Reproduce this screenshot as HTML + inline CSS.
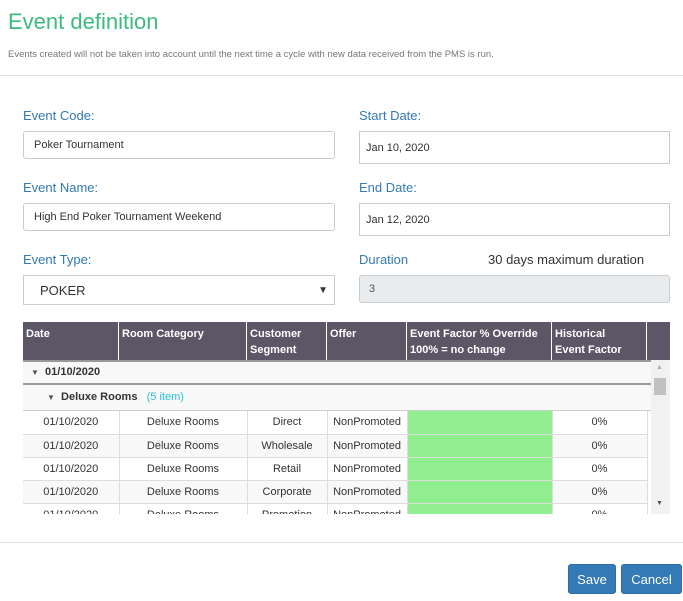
<!DOCTYPE html>
<html><head><style>
*{box-sizing:border-box;margin:0;padding:0}
body{width:683px;height:601px;background:#fff;font-family:"Liberation Sans",sans-serif;position:relative;overflow:hidden;color:#333}
.a{position:absolute}
.lbl{color:#337ab7;font-size:13px}
.inp{border:1px solid #ccc;border-radius:3px;background:#fff;font-size:11px;padding-left:10px;display:flex;align-items:center;color:#333}
table{border-collapse:collapse;table-layout:fixed;font-size:11px}
td{border-right:1px solid #ddd;text-align:center;height:23px;border-bottom:1px solid #ddd;white-space:nowrap;overflow:hidden}
.hd{background:#5c5667;color:#fff;font-weight:bold;font-size:11px}
.hd div{position:absolute;top:0;height:38px;border-right:1px solid #fff;padding:4px 3px;line-height:16px}
.g{background:#f8f8f8}
.btn{background:#337ab7;color:#fff;border:1px solid #2e6da4;border-radius:3px;font-size:13px;display:flex;align-items:center;justify-content:center}
</style></head><body>
<div class="a" style="left:8px;top:9px;font-size:22px;color:#3dbb7e">Event definition</div>
<div class="a" style="left:8px;top:49px;font-size:9.5px;color:#777">Events created will not be taken into account until the next time a cycle with new data received from the PMS is run.</div>
<div class="a" style="left:0;top:75px;width:683px;height:1px;background:#ddd"></div>

<div class="a lbl" style="left:23px;top:108px">Event Code:</div>
<div class="a inp" style="left:23px;top:131px;width:312px;height:28px">Poker Tournament</div>
<div class="a lbl" style="left:359px;top:108px">Start Date:</div>
<div class="a inp" style="left:359px;top:131px;width:311px;height:33px;border-radius:0;padding-left:6px">Jan 10, 2020</div>

<div class="a lbl" style="left:23px;top:180px">Event Name:</div>
<div class="a inp" style="left:23px;top:203px;width:312px;height:28px">High End Poker Tournament Weekend</div>
<div class="a lbl" style="left:359px;top:180px">End Date:</div>
<div class="a inp" style="left:359px;top:203px;width:311px;height:33px;border-radius:0;padding-left:6px">Jan 12, 2020</div>

<div class="a lbl" style="left:23px;top:252px">Event Type:</div>
<div class="a inp" style="left:23px;top:275px;width:312px;height:30px;border-radius:0;padding-left:16px;font-size:13px">POKER<span style="position:absolute;right:6px;font-size:10px">▼</span></div>
<div class="a lbl" style="left:359px;top:252px">Duration</div>
<div class="a" style="left:488px;top:252px;font-size:13px;color:#333">30 days maximum duration</div>
<div class="a inp" style="left:359px;top:275px;width:311px;height:28px;background:#e9ecef;padding-left:9px;color:#555">3</div>

<div class="a hd" style="left:23px;top:322px;width:647px;height:38px">
<div style="left:0;width:96px">Date</div>
<div style="left:96px;width:128px">Room Category</div>
<div style="left:224px;width:80px">Customer<br>Segment</div>
<div style="left:304px;width:80px">Offer</div>
<div style="left:384px;width:145px">Event Factor % Override<br>100% = no change</div>
<div style="left:529px;width:95px">Historical<br>Event Factor</div>
</div>
<div class="a" style="left:23px;top:360px;width:628px;height:154px;overflow:hidden">
<div style="height:25px;background:#f8f8f8;border-top:2px solid #999;border-bottom:2px solid #999;font-size:11px;font-weight:bold;padding-left:8px;line-height:21px"><span style="font-size:8px;color:#555">▼</span>&nbsp; 01/10/2020</div>
<div style="height:26px;background:#f8f8f8;border-bottom:1px solid #ccc;font-size:11px;font-weight:bold;padding-left:24px;line-height:25px"><span style="font-size:8px;color:#555">▼</span>&nbsp; Deluxe Rooms &nbsp; <span style="color:#2bc0d9;font-weight:normal">(5 item)</span></div>
<table style="width:624px">
<colgroup><col style="width:96px"><col style="width:128px"><col style="width:80px"><col style="width:80px"><col style="width:145px"><col style="width:95px"></colgroup>
<tr><td>01/10/2020</td><td>Deluxe Rooms</td><td>Direct</td><td>NonPromoted</td><td style="background:#90ee90"></td><td>0%</td></tr>
<tr class="g"><td>01/10/2020</td><td>Deluxe Rooms</td><td>Wholesale</td><td>NonPromoted</td><td style="background:#90ee90"></td><td>0%</td></tr>
<tr><td>01/10/2020</td><td>Deluxe Rooms</td><td>Retail</td><td>NonPromoted</td><td style="background:#90ee90"></td><td>0%</td></tr>
<tr class="g"><td>01/10/2020</td><td>Deluxe Rooms</td><td>Corporate</td><td>NonPromoted</td><td style="background:#90ee90"></td><td>0%</td></tr>
<tr><td>01/10/2020</td><td>Deluxe Rooms</td><td>Promotion</td><td>NonPromoted</td><td style="background:#90ee90"></td><td>0%</td></tr>
</table>
</div>
<div class="a" style="left:651px;top:360px;width:19px;height:154px;background:#f1f1f1">
<div class="a" style="left:5px;top:4px;font-size:7px;color:#aaa">▲</div>
<div class="a" style="left:3px;top:18px;width:12px;height:17px;background:#c1c1c1"></div>
<div class="a" style="left:5px;top:140px;font-size:7px;color:#555">▼</div>
</div>

<div class="a" style="left:0;top:542px;width:683px;height:1px;background:#ddd"></div>
<div class="a btn" style="left:568px;top:564px;width:48px;height:30px">Save</div>
<div class="a btn" style="left:621px;top:564px;width:61px;height:30px">Cancel</div>
</body></html>
